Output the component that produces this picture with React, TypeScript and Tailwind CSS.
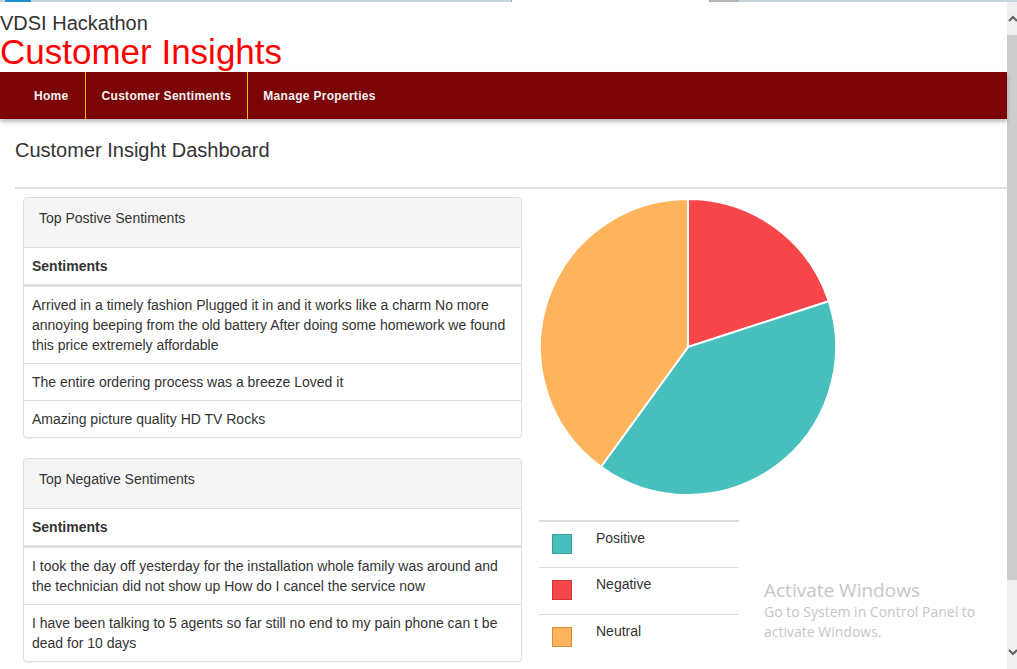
import React from "react";

const positives = [
  "Arrived in a timely fashion Plugged it in and it works like a charm No more annoying beeping from the old battery After doing some homework we found this price extremely affordable",
  "The entire ordering process was a breeze Loved it",
  "Amazing picture quality HD TV Rocks",
];

const negatives = [
  "I took the day off yesterday for the installation whole family was around and the technician did not show up How do I cancel the service now",
  "I have been talking to 5 agents so far still no end to my pain phone can t be dead for 10 days",
];

function Panel({ title, rows, className }: { title: string; rows: string[]; className?: string }) {
  return (
    <div
      className={
        "border border-[#dddddd] rounded-[4px] bg-white shadow-[0_1px_1px_rgba(0,0,0,0.05)] overflow-hidden " +
        (className || "")
      }
    >
      <div className="h-[50px] bg-[#f5f5f5] border-b border-[#dddddd] pl-[15px] pt-[10px] text-[14px] leading-[20px] text-[#333]">
        {title}
      </div>
      <div className="px-[8px] py-[8px] border-b-2 border-[#dddddd] text-[14px] leading-[20px] font-bold text-[#333]">
        Sentiments
      </div>
      {rows.map((r, i) => (
        <div
          key={i}
          className="px-[8px] py-[8px] border-t border-[#dddddd] text-[14px] leading-[20px] text-[#333]"
        >
          {r}
        </div>
      ))}
    </div>
  );
}

const legend = [
  { label: "Positive", fill: "bg-[#46bfbd]", border: "border-[#369e9c]" },
  { label: "Negative", fill: "bg-[#f7464a]", border: "border-[#c9393c]" },
  { label: "Neutral", fill: "bg-[#fdb45c]", border: "border-[#d4913c]" },
];

export default function App() {
  return (
    <div
      className="w-[1017px] h-[669px] overflow-hidden flex flex-col bg-white relative text-[#333]"
      style={{ fontFamily: '"Liberation Sans", Arial, sans-serif' }}
    >
      {/* top strip */}
      <div className="h-[2px] bg-[#c5d5dc] flex shrink-0">
        <div className="ml-[5px] w-[26px] h-[2px] bg-[#1d8fd6]" />
        <div className="ml-[480px] w-[199px] h-[2px] bg-white border-x border-[#9aa]" />
        <div className="w-[29px] h-[2px] bg-[#b8b8b8]" />
      </div>
      <div className="flex flex-1 min-h-0">
        {/* main */}
        <div className="flex-1 min-w-0 flex flex-col">
          <div className="pt-[10px]">
            <div className="text-[20px] leading-[22px] text-[#333]">VDSI Hackathon</div>
            <div className="text-[35px] leading-[35px] text-[#ff0000]">Customer Insights</div>
          </div>
          <nav className="mt-[3px] h-[47px] bg-[#7b0505] flex items-stretch pl-[18px] shadow-[0_3px_4px_rgba(0,0,0,0.25)] relative z-10">
            <div className="px-[16px] flex items-center border-r border-[#f0c000] text-[12px] font-bold tracking-[0.3px] text-[#f2f2f2]">
              Home
            </div>
            <div className="px-[16px] flex items-center border-r border-[#f0c000] text-[12px] font-bold tracking-[0.3px] text-[#f2f2f2]">
              Customer Sentiments
            </div>
            <div className="pl-[15px] pr-[16px] flex items-center text-[12px] font-bold tracking-[0.3px] text-[#f2f2f2]">
              Manage Properties
            </div>
          </nav>
          <div className="pl-[15px]">
            <h4 className="mt-[20px] text-[20px] leading-[22px] text-[#333]">Customer Insight Dashboard</h4>
            <div className="mt-[26px] h-[2px] bg-[#e0e0e0]" />
            <div className="flex mt-[8px] ml-[8px]">
              <div className="w-[499px] shrink-0">
                <Panel title="Top Postive Sentiments" rows={positives} />
                <Panel title="Top Negative Sentiments" rows={negatives} className="mt-[20px]" />
              </div>
              <div className="ml-[16px] flex flex-col">
                <svg width="300" height="300" viewBox="0 0 300 300" className="block">
                  <path d="M150,150 L150,2 A148,148 0 0 1 290.76,104.27 Z" fill="#f7464a" stroke="#ffffff" strokeWidth="2" strokeLinejoin="round" />
                  <path d="M150,150 L290.76,104.27 A148,148 0 0 1 63.01,269.73 Z" fill="#46bfbd" stroke="#ffffff" strokeWidth="2" strokeLinejoin="round" />
                  <path d="M150,150 L63.01,269.73 A148,148 0 0 1 150,2 Z" fill="#fdb45c" stroke="#ffffff" strokeWidth="2" strokeLinejoin="round" />
                </svg>
                <div className="mt-[23px] w-[200px] ml-[1px] border-t-2 border-[#dddddd]">
                  {legend.map((l, i) => (
                    <div
                      key={l.label}
                      className={
                        "flex items-start " + (i === 0 ? "h-[45px]" : "h-[47px] border-t border-[#dddddd]")
                      }
                    >
                      <div className={"ml-[13px] mt-[12px] w-[20px] h-[20px] border " + l.fill + " " + l.border} />
                      <div className="ml-[24px] mt-[6px] text-[14px] leading-[20px] text-[#333]">{l.label}</div>
                    </div>
                  ))}
                </div>
              </div>
            </div>
          </div>
        </div>
        {/* scrollbar */}
        <div className="w-[10px] shrink-0 bg-[#f0f0f0] flex flex-col">
          <div className="h-[33px] flex items-center justify-end">
            <svg width="9" height="8" viewBox="0 0 9 8">
              <path d="M1 6 L5 2 L9 6" fill="none" stroke="#606060" strokeWidth="2" />
            </svg>
          </div>
          <div className="h-[545px] bg-[#cdcdcd]" />
          <div className="flex-1 flex items-end justify-end pb-[13px]">
            <svg width="9" height="8" viewBox="0 0 9 8">
              <path d="M1 2 L5 6 L9 2" fill="none" stroke="#606060" strokeWidth="2" />
            </svg>
          </div>
        </div>
      </div>
      {/* Activate Windows watermark */}
      <div
        className="absolute left-[764px] top-[578px] text-[#c6c6c6] pointer-events-none"
        style={{ fontFamily: '"Open Sans", "Noto Sans", sans-serif' }}
      >
        <div className="text-[19px] leading-[24px]">Activate Windows</div>
        <div className="text-[14px] leading-[20px]">Go to System in Control Panel to</div>
        <div className="text-[14px] leading-[20px]">activate Windows.</div>
      </div>
    </div>
  );
}
